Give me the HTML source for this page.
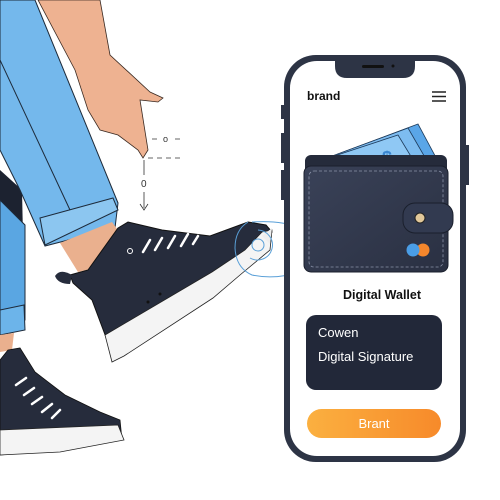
<!DOCTYPE html>
<html><head><style>
html,body{margin:0;padding:0;background:#fff;width:500px;height:500px;overflow:hidden}
svg{display:block}
text{font-family:"Liberation Sans",sans-serif}
</style></head><body>
<svg width="500" height="500" viewBox="0 0 500 500" xmlns="http://www.w3.org/2000/svg">
<defs>
<linearGradient id="og" x1="0" x2="1"><stop offset="0" stop-color="#fbb040"/><stop offset="1" stop-color="#f78a2a"/></linearGradient>
<linearGradient id="wg" x1="0" x2="1" y1="0" y2="1"><stop offset="0" stop-color="#3a4258"/><stop offset="1" stop-color="#2a3042"/></linearGradient>
</defs>
<!-- standing leg -->
<path d="M0,170 L22,190 L25,330 L0,335 Z" fill="#1c2230"/>
<path d="M0,200 L25,225 L25,320 L0,330 Z" fill="#5aa6e2" stroke="#1d2a3a" stroke-width="1"/>
<path d="M0,310 L24,305 L25,330 L0,335 Z" fill="#6cb4ea" stroke="#1d2a3a" stroke-width="1"/>
<path d="M0,335 L14,333 L12,350 L0,352 Z" fill="#eab08e"/>
<!-- jeans upper leg -->
<path d="M0,0 L35,0 L118,203 L115,228 L45,246 L20,190 L0,150 Z" fill="#74b8ec" stroke="#1d2a3a" stroke-width="1"/>
<path d="M0,60 L70,210" stroke="#1d2a3a" stroke-width="1" fill="none"/>
<path d="M40,218 L113,198 L118,210 L45,245 Z" fill="#8cc6f0" stroke="#1d2a3a" stroke-width="1"/>
<!-- ankle -->
<path d="M60,243 L112,222 L125,240 L120,262 L78,272 Z" fill="#eab08e"/>
<!-- hand -->
<path d="M38,0 L100,0 L110,55 L150,92 L163,98 L158,102 L140,100 L148,150 L143,158 L138,150 L118,135 L100,130 L88,110 L75,70 Z" fill="#eeb291" stroke="#3a2a22" stroke-width="0.8"/>
<!-- dotted -->
<g stroke="#333" stroke-width="0.8" fill="none">
<path d="M152,139 H158 M175,139 H182 M148,158 H182" stroke-dasharray="5,4"/>
<path d="M144,160 V175 M144,192 V208 M140,204 L144,210 L148,204"/>
</g>
<text x="163" y="142" font-size="9" fill="#333">o</text>
<text x="141" y="187" font-size="10" fill="#333">0</text>
<!-- main shoe -->
<path d="M118,228 L128,222 L162,230 L210,236 L248,222 L266,225 L272,232 L240,272 L213,295 L124,352 L112,356 L107,340 L92,300 L73,283 L70,275 L88,270 Z" fill="#262c3c" stroke="#111" stroke-width="1"/>
<path d="M105,335 L212,272 L245,250 L262,232 L272,230 L270,250 L240,275 L213,298 L124,356 L112,362 Z" fill="#f4f4f4" stroke="#222" stroke-width="0.8"/>
<path d="M262,236 L272,228 L270,244 Z" fill="#eee"/>
<g stroke="#fff" stroke-width="2.5" stroke-linecap="round">
<path d="M143,252 L150,240 M155,250 L162,238 M168,248 L175,236 M181,246 L188,234 M193,244 L198,236"/>
</g>
<circle cx="130" cy="251" r="2.5" fill="none" stroke="#fff"/>
<circle cx="148" cy="302" r="1.5" fill="#111"/><circle cx="160" cy="294" r="1.5" fill="#111"/>
<path d="M55,276 Q60,268 72,275 L70,284 Q58,284 55,276 Z" fill="#262c3c"/>
<!-- toe circle -->
<g fill="none" stroke="#5aa0d8" stroke-width="1">
<circle cx="258" cy="245" r="6"/><path d="M258,230 A15,15 0 1,1 250,258"/>
<path d="M248,222 Q235,230 235,248 Q236,268 252,275 Q275,280 300,272"/>
<path d="M252,222 Q280,220 302,228"/>
</g>
<!-- second shoe -->
<path d="M8,350 L20,348 L35,372 L65,395 L100,412 L120,420 L122,440 L60,450 L0,455 L0,360 Z" fill="#262c3c" stroke="#111" stroke-width="0.8"/>
<path d="M0,430 L118,425 L124,440 L60,452 L0,455 Z" fill="#f4f4f4" stroke="#222" stroke-width="0.8"/>
<g stroke="#fff" stroke-width="2.5" stroke-linecap="round">
<path d="M16,385 L26,378 M24,395 L34,388 M32,404 L42,397 M42,412 L52,404 M52,418 L60,410"/>
</g>
<!-- phone -->
<rect x="284" y="55" width="182" height="407" rx="32" fill="#2d3445"/>
<rect x="290" y="61" width="170" height="395" rx="27" fill="#fff"/>
<path d="M335,60 H415 V66 Q415,78 403,78 H347 Q335,78 335,66 Z" fill="#2d3445"/>
<rect x="362" y="65" width="22" height="3" rx="1.5" fill="#111"/><circle cx="393" cy="66" r="1.5" fill="#111"/>
<rect x="281" y="105" width="3" height="14" fill="#2d3445"/><rect x="281" y="133" width="3" height="30" fill="#2d3445"/><rect x="281" y="170" width="3" height="30" fill="#2d3445"/>
<rect x="466" y="145" width="3" height="40" fill="#2d3445"/>
<text x="307" y="100" font-size="12" font-weight="bold" fill="#111">brand</text>
<g stroke="#222" stroke-width="1.5"><path d="M432,92 H446 M432,96.5 H446 M432,101 H446"/></g>
<!-- bills -->
<g stroke="#1d3a5a" stroke-width="0.8">
<path d="M322,160 L418,124 L440,165 L330,168 Z" fill="#5aa6e8"/>
<path d="M316,162 L408,128 L430,166 L320,168 Z" fill="#7dbcf0"/>
<path d="M310,164 L398,135 L418,168 L312,168 Z" fill="#8fc8f4"/>
</g>
<text x="382" y="164" font-size="18" font-weight="bold" fill="#3a86d0">$</text>
<!-- wallet -->
<rect x="305" y="155" width="142" height="20" rx="6" fill="#252b3b"/>
<rect x="304" y="166" width="144" height="106" rx="7" fill="url(#wg)" stroke="#1a1f2c"/>
<rect x="309" y="171" width="134" height="96" rx="5" fill="none" stroke="#8a92a8" stroke-width="0.8" stroke-dasharray="3,2"/>
<rect x="403" y="203" width="50" height="30" rx="12" fill="#323a50" stroke="#1a1f2c"/>
<circle cx="420" cy="218" r="5" fill="#e2c89a" stroke="#222"/>
<circle cx="423" cy="250" r="6.5" fill="#f4862c"/><circle cx="413" cy="250" r="6.5" fill="#4a9de6"/>
<text x="343" y="299" font-size="12.5" font-weight="bold" fill="#111">Digital Wallet</text>
<rect x="306" y="315" width="136" height="75" rx="10" fill="#222839"/>
<text x="318" y="337" font-size="13" fill="#fff">Cowen</text>
<text x="318" y="361" font-size="13" fill="#fff">Digital Signature</text>
<rect x="307" y="409" width="134" height="29" rx="14.5" fill="url(#og)"/>
<text x="374" y="428" font-size="13" fill="#fff" text-anchor="middle">Brant</text>
</svg>
</body></html>
